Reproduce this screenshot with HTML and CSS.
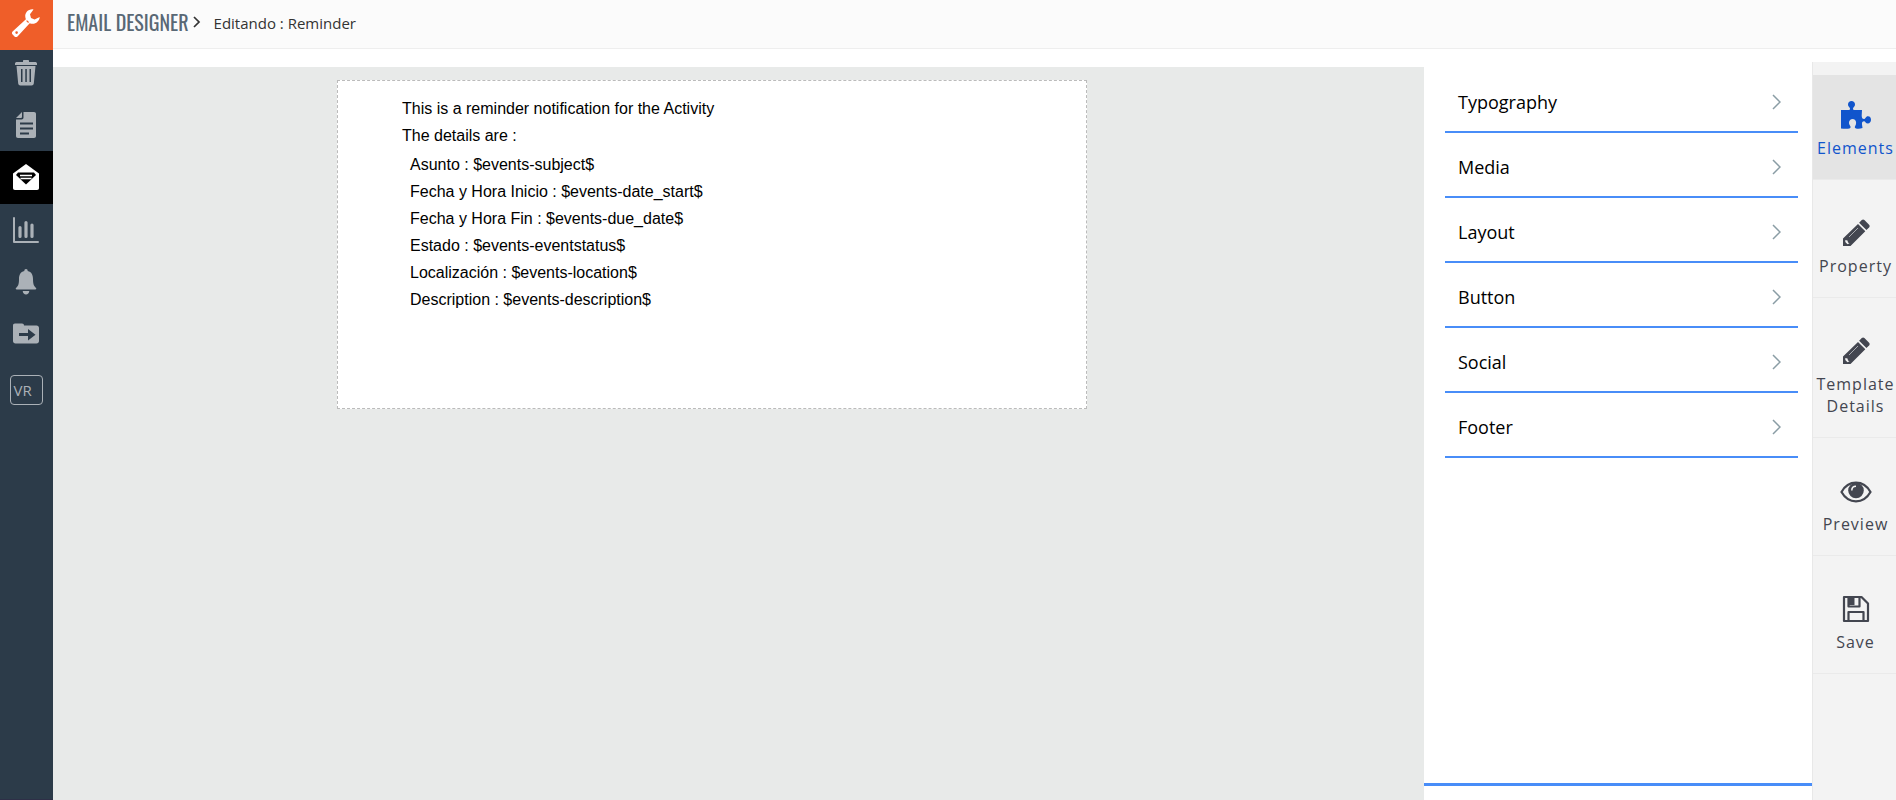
FILE: index.html
```html
<!DOCTYPE html>
<html lang="es">
<head>
<meta charset="utf-8">
<title>Email Designer</title>
<link rel="stylesheet" href="styles.css">
</head>
<body>
<div class="app">
  <nav class="sidebar" aria-label="Modules">
    <a class="side-link brand" href="#" aria-label="Settings"><svg width="30" height="30" viewBox="0 0 30 30"><path fill="currentColor" fill-rule="evenodd" d="M22.500 1.400c-4.900-.8-8.700 3.200-8.200 7.400.1 1 .2 1.700.6 2.500L1.600 23.500c-.9.900-.9 2.100 0 3l1.900 1.900c.9.900 2.100.9 3 0L18.700 15.200c4.800 2 9.700-1.300 10-6.200l-5.100 2.400-3.600-1.400-1-3.700zM5.600 23.300a1.300 1.300 0 1 1 0 2.600 1.300 1.300 0 0 1 0-2.600zM16 12.200l2 1.900-.8.800-2-1.900z"/></svg></a>
    <a class="side-link" href="#" aria-label="Recycle bin"><svg width="24" height="28" viewBox="0 0 24 28"><path fill="currentColor" fill-rule="evenodd" d="M1 4.500C1 3.500 2 3 3 3h6V2c0-.6.400-1 1-1h4c.6 0 1 .4 1 1v1h6c1 0 2 .5 2 1.500V6H1zM2.500 7h19l-1.700 17.500c-.2 1.300-1 2-2.300 2h-11c-1.300 0-2.100-.7-2.300-2zM7 10v13h1.500V10zm4.300 0v13h1.500V10zm4.200 0v13H17V10z"/></svg></a>
    <a class="side-link" href="#" aria-label="Documents"><svg width="22" height="28" viewBox="0 0 22 28"><path fill="currentColor" fill-rule="evenodd" d="M8.500 1H19c1.300 0 2 .7 2 2v22c0 1.300-.7 2-2 2H3c-1.300 0-2-.7-2-2V8.500h5.500c1.300 0 2-.7 2-2zM7 1v4.500C7 6.500 6.500 7 5.500 7H1zM5 11.500v2h13v-2zm0 5v2h13v-2zm0 5v2h9v-2z"/></svg></a>
    <a class="side-link current" href="#" aria-label="Email templates" aria-current="page"><svg width="28" height="28" viewBox="0 0 28 28"><path fill="currentColor" d="M14 1 27 10.500V25c0 1-.7 2-2 2H3c-1.300 0-2-1-2-2V10.500z"/><path d="M6 9.500h16l2 2.500-10 9.500L4 12z"/><path fill="none" stroke="currentColor" stroke-width="1.600" d="M8 12.500h12M8.500 15.500h11"/></svg></a>
    <a class="side-link" href="#" aria-label="Reports"><svg width="28" height="28" viewBox="0 0 28 28"><path fill="none" stroke="currentColor" stroke-linecap="round" stroke-linejoin="round" stroke-width="2" d="M2 2v24h24"/><path fill="none" stroke="currentColor" stroke-linecap="round" stroke-width="3.200" d="M8 11.500v9M14 6.500v14M20 9v11.500"/></svg></a>
    <a class="side-link" href="#" aria-label="Notifications"><svg width="22" height="28" viewBox="0 0 22 28"><path fill="currentColor" d="M11 1c1.200 0 1.700.7 1.700 2 3.800.8 5.300 4 5.300 8 0 5.500 1 7.200 3 9 .6.700.2 1.500-.7 1.500H1.700c-.9 0-1.300-.8-.7-1.500 2-1.800 3-3.500 3-9 0-4 1.500-7.200 5.300-8 0-1.300.5-2 1.700-2zM7.700 23h6.600c-.2 2-1.500 3.500-3.300 3.500S7.900 25 7.700 23z"/></svg></a>
    <a class="side-link" href="#" aria-label="Import and export"><svg width="28" height="24" viewBox="0 0 28 24"><path fill="currentColor" fill-rule="evenodd" d="M3 1.500h7c1.300 0 2 .7 2 2h12.500c1.500 0 2.500 1 2.500 2.500v13c0 1.500-1 2.500-2.500 2.500h-21C2 21.500 1 20.500 1 19V3.500c0-1.300.7-2 2-2zM16 7v4H7v3h9v4.500l7.500-5.700z"/></svg></a>
    <a class="side-link" href="#"><span class="side-badge">VR</span></a>
  </nav>
  <div class="main">
    <header class="topbar">
      <h1 class="title">EMAIL DESIGNER</h1>
      <svg class="crumb-arrow" width="8" height="12" viewBox="0 0 8 12" aria-hidden="true"><path fill="none" stroke="currentColor" stroke-width="1.700" d="m1 1 5 5-5 5"/></svg>
      <span class="crumb">Editando : Reminder</span>
    </header>
    <div class="workspace">
      <main class="canvas">
        <article class="mail">
          <div class="mail-intro">
            <p>This is a reminder notification for the Activity</p>
            <p>The details are :</p>
          </div>
          <div class="mail-details">
            <p>Asunto : $events-subject$</p>
            <p>Fecha y Hora Inicio : $events-date_start$</p>
            <p>Fecha y Hora Fin : $events-due_date$</p>
            <p>Estado : $events-eventstatus$</p>
            <p>Localización : $events-location$</p>
            <p>Description : $events-description$</p>
          </div>
        </article>
      </main>
      <aside class="panel">
        <div class="groups">
          <button class="group" type="button">Typography<svg class="chevron" width="9" height="16" viewBox="0 0 9 16"><path d="m1 1 7 7-7 7"/></svg></button>
          <button class="group" type="button">Media<svg class="chevron" width="9" height="16" viewBox="0 0 9 16"><path d="m1 1 7 7-7 7"/></svg></button>
          <button class="group" type="button">Layout<svg class="chevron" width="9" height="16" viewBox="0 0 9 16"><path d="m1 1 7 7-7 7"/></svg></button>
          <button class="group" type="button">Button<svg class="chevron" width="9" height="16" viewBox="0 0 9 16"><path d="m1 1 7 7-7 7"/></svg></button>
          <button class="group" type="button">Social<svg class="chevron" width="9" height="16" viewBox="0 0 9 16"><path d="m1 1 7 7-7 7"/></svg></button>
          <button class="group" type="button">Footer<svg class="chevron" width="9" height="16" viewBox="0 0 9 16"><path d="m1 1 7 7-7 7"/></svg></button>
        </div>
      </aside>
      <div class="rail">
        <button class="tool active" type="button"><svg width="32" height="30" viewBox="0 0 32 30"><path fill="currentColor" d="M1 10h7.800c1.200 0 1.600-.9 1-2C9.300 7 8 6.300 8 4.500 8 2.500 9.500 1 11.500 1S15 2.500 15 4.500c0 1.800-1.300 2.500-1.800 3.500-.5 1.100-.1 2 1.100 2H22l-.3 5.500c0 2.500.8 3.500 2.300 3.500s1.500-2.800 4-2.800c2 0 3 1.600 3 3.600s-1.200 3.700-3.200 3.700c-2.200 0-2.300-2.300-3.800-2.300s-2.200 1-2 3.200L22.500 28c-2 .8-4.500 1-6.500.5-1.300-.3-1.500-1.500-.8-2.500.6-1.100.9-2 .9-3.200 0-2.100-1.500-3.800-3.500-3.800S9 20.700 9 22.800c0 1.200.4 2 1.200 3.200.7 1 .5 2.100-.8 2.400-2 .4-5 .4-8.400 0z"/></svg><span>Elements</span></button>
        <button class="tool" type="button"><svg width="30" height="30" viewBox="0 0 30 30"><path fill="currentColor" d="m20.800 2.100c.8-.8 1.800-.8 2.600 0l4.700 4.700c.8.800.8 1.800 0 2.600l-2.700 2.700-7.300-7.300zM17 5.900l7.300 7.300L9.500 28H2v-7.500z"/><path class="cutout" d="m8 19 9-9"/><path class="nib" d="m4.300 22 2.200.5.500 2 1.500.8-2 .9L4.300 24z"/></svg><span>Property</span></button>
        <button class="tool" type="button"><svg width="30" height="30" viewBox="0 0 30 30"><path fill="currentColor" d="m20.800 2.100c.8-.8 1.800-.8 2.600 0l4.700 4.700c.8.800.8 1.800 0 2.600l-2.700 2.700-7.300-7.300zM17 5.900l7.300 7.300L9.500 28H2v-7.500z"/><path class="cutout" d="m8 19 9-9"/><path class="nib" d="m4.300 22 2.200.5.500 2 1.500.8-2 .9L4.300 24z"/></svg><span>Template Details</span></button>
        <button class="tool" type="button"><svg width="32" height="30" viewBox="0 0 32 30"><path fill="none" stroke="currentColor" stroke-width="2.200" d="M1.500 16C8.500 3.600 23.500 3.600 30.500 16 23.500 28.400 8.500 28.400 1.500 16z"/><circle cx="16" cy="14.500" r="7.800" fill="currentColor"/><path class="glint" d="M11.800 14.500c0-2.500 1.700-4.200 4.200-4.200"/></svg><span>Preview</span></button>
        <button class="tool" type="button"><svg width="30" height="30" viewBox="0 0 30 30"><path fill="none" stroke="currentColor" stroke-width="2.200" stroke-linejoin="round" d="M3 3h17.500L27 9.500V27H3zM7.500 3v9.500h11V3M7.500 27v-9h15v9"/><path fill="currentColor" d="M7 3h6.500v8H7z"/></svg><span>Save</span></button>
      </div>
    </div>
  </div>
</div>
</body>
</html>
```
FILE: styles.css
```css
* { box-sizing: border-box; }

body {
  margin: 0;
  font-family: "Open Sans", "Noto Sans", sans-serif;
  color: #000;
  background: #fff;
}

p, h1 { margin: 0; }

button {
  font: inherit;
  border: 0;
  background: none;
  cursor: pointer;
}

svg { display: block; flex: none; }

.app { display: flex; min-height: 100vh; }

.sidebar {
  flex: none;
  width: 53px;
  background: #2c3b49;
  border-bottom: 1px solid #2e2f47;
}

.side-link {
  display: flex;
  align-items: center;
  justify-content: center;
  height: 52px;
  padding: 0 1px 1px 0;
  color: #abb1b7;
  text-decoration: none;
}

.side-link.brand {
  height: 50px;
  padding-bottom: 4px;
  margin-bottom: -3px;
  color: #fff;
  background: #ef5e29;
}

.side-link.current {
  height: 53px;
  color: #fff;
  background: #000;
}

.side-badge {
  width: 33px;
  height: 30px;
  margin-top: 9px;
  padding-left: 3px;
  border: 1px solid #abb1b7;
  border-radius: 4px;
  font-size: 15px;
  line-height: 28px;
}

.main { flex: 1; display: flex; flex-direction: column; min-width: 0; }

.topbar {
  display: flex;
  align-items: center;
  height: 49px;
  padding: 0 14px 2px;
  background: #fbfbfb;
  border-bottom: 1px solid #eee;
}

.title {
  padding-bottom: 2px;
  font-family: "Oswald", "Liberation Sans Narrow", "Liberation Sans", sans-serif;
  font-size: 20px;
  font-weight: 400;
  line-height: 24px;
  color: #596875;
}

.crumb-arrow { margin: 0 13px 2px 4px; color: #333; }

.crumb { font-size: 15px; line-height: 20px; color: #333; }

.workspace { flex: 1; display: flex; padding-top: 13px; }

.canvas {
  flex: 1;
  min-width: 0;
  margin-top: 5px;
  padding: 13px 73px 13px 20px;
  background: #e8eae9;
}

.mail {
  max-width: 750px;
  min-height: 329px;
  margin: 0 auto;
  padding: 14px 64px;
  border: 1px dashed #bbb;
  background: #fff;
  font-family: "Liberation Sans", Arial, sans-serif;
  font-size: 16px;
  line-height: 27px;
}

.mail-details { margin-top: 2px; padding-left: 8px; }

.panel {
  flex: none;
  display: flex;
  flex-direction: column;
  width: 388px;
  padding-bottom: 14px;
}

.groups {
  flex: 1;
  padding: 6px 14px 0 21px;
  border-bottom: 3px solid #488df8;
}

.group {
  display: flex;
  align-items: center;
  justify-content: space-between;
  width: 100%;
  height: 65px;
  padding: 6px 17px 2px 13px;
  border-bottom: 2px solid #488df8;
  font-size: 18px;
  line-height: 24px;
  color: #000;
}

.chevron { fill: none; stroke: #8a9da5; stroke-width: 1.5; }

.rail {
  flex: none;
  width: 84px;
  background: #f3f3f3;
  border-left: 1px solid #e8e8e8;
}

.tool {
  display: flex;
  flex-direction: column;
  align-items: center;
  gap: 7px;
  width: 100%;
  margin-top: 13px;
  padding: 25px 0 20px 2px;
  border-bottom: 1px solid #eaeaea;
  font-size: 16px;
  line-height: 22px;
  letter-spacing: 1px;
  color: #434650;
}

.tool.active { color: #1155cc; background: #e4e4e4; }

.glint { fill: none; stroke: #f3f3f3; stroke-width: 1.5; }

.cutout { fill: none; stroke: #a9abb0; stroke-width: 1; }

.nib { fill: #f3f3f3; }
```
